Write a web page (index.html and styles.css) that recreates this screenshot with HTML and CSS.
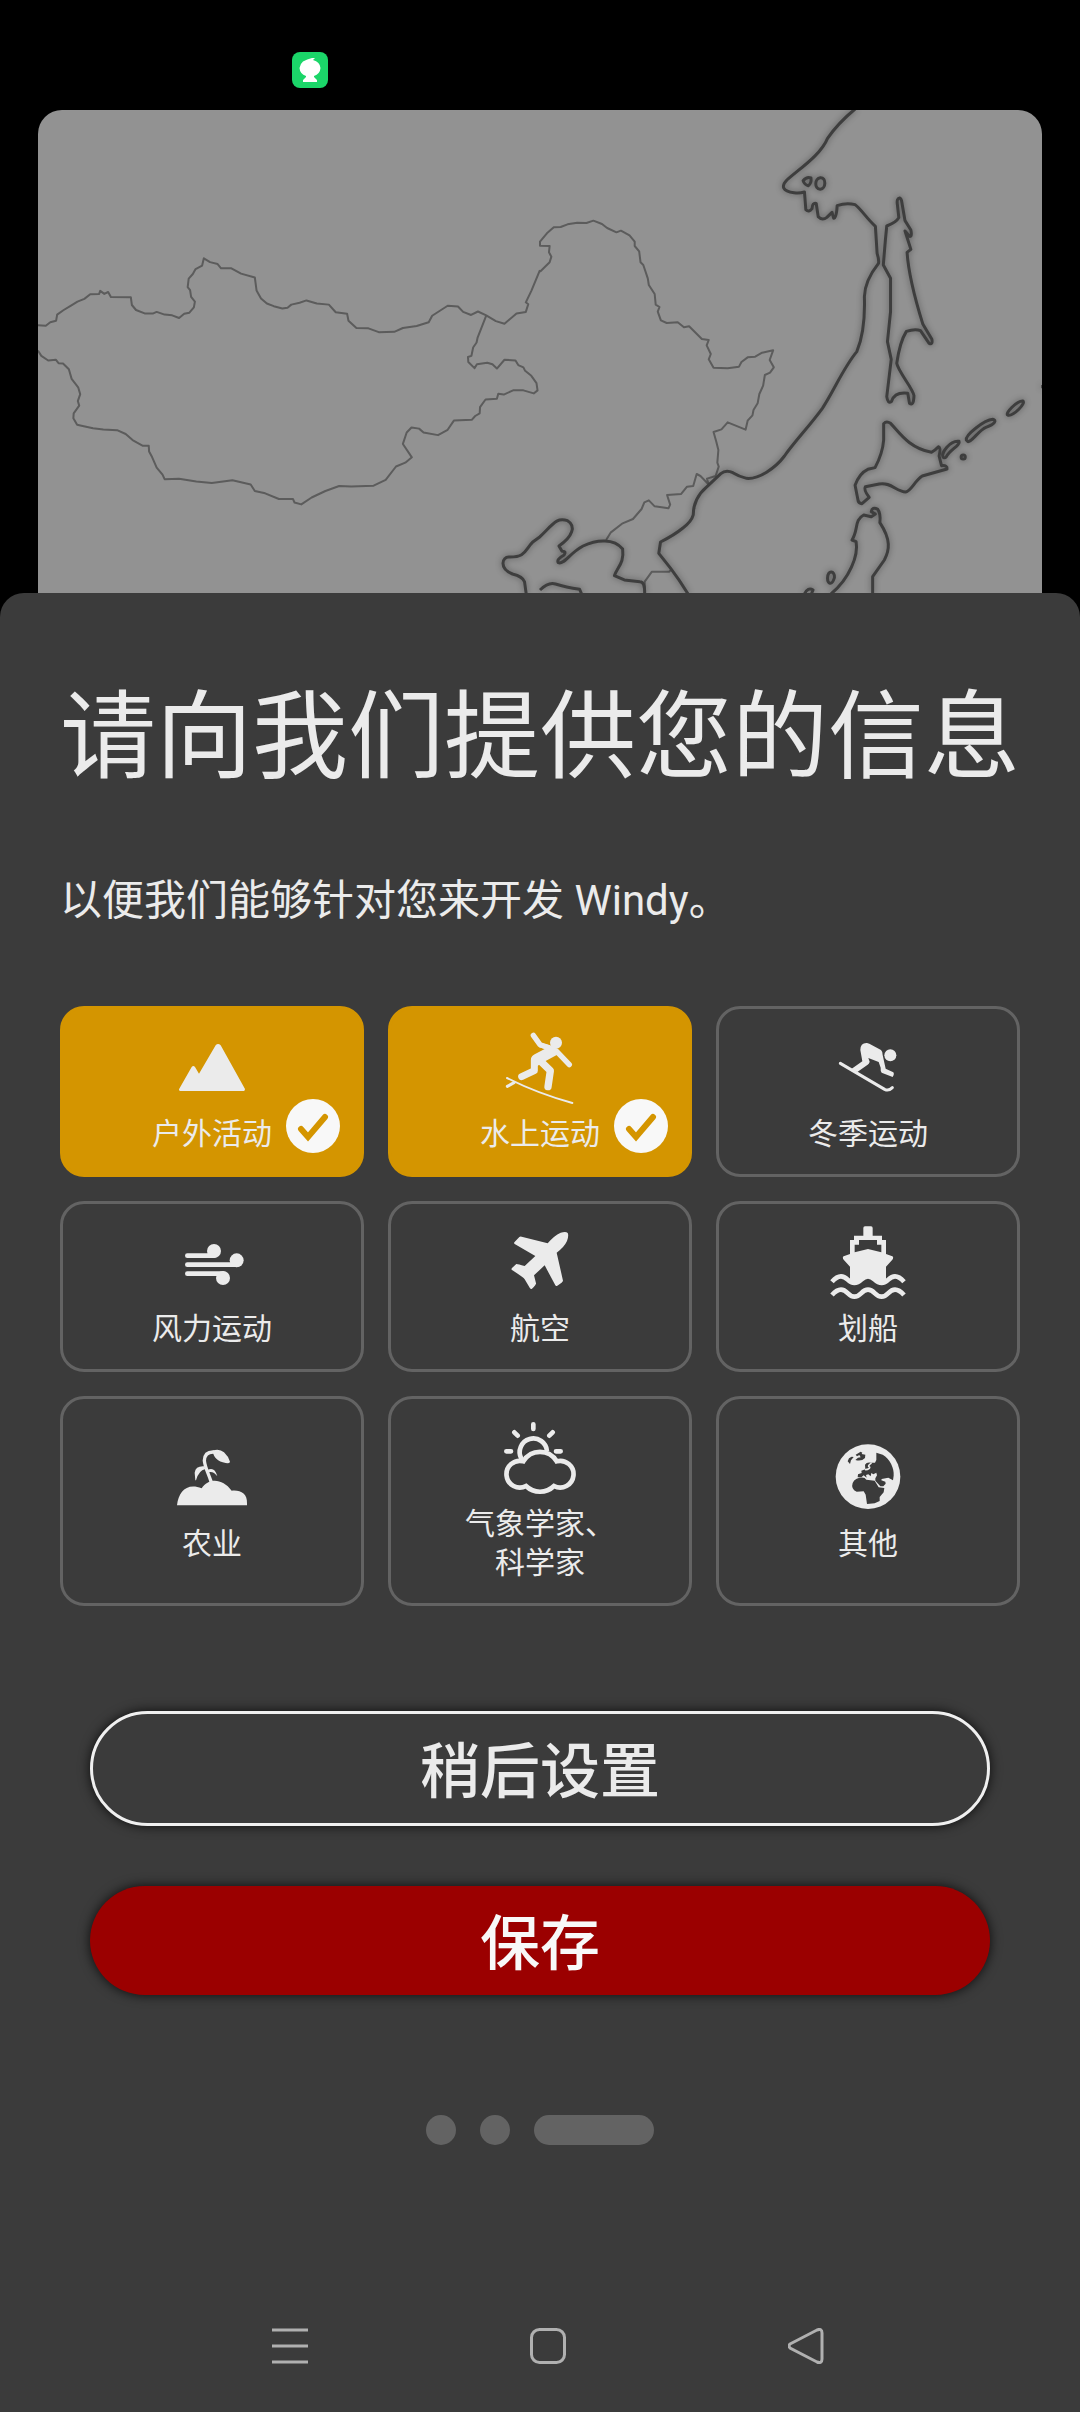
FILE: index.html
```html
<!DOCTYPE html>
<html lang="zh-CN">
<head>
    <meta charset="UTF-8">
    <meta name="viewport" content="width=device-width, initial-scale=1.0">
    <title>Windy</title>
    <link rel="stylesheet" href="styles.css">
</head>
<body>
    <header class="status-bar">
        <svg class="app-icon" viewBox="0 0 36 36" aria-hidden="true">
            <rect width="36" height="36" rx="8" fill="#1bd669"/>
            <path d="M11 9.5Q15 7 20 6L23 6L21 8Q28 10 28.5 16Q28 22 22 24L22 25L25 28V30H11V28L14 25L14 24Q8 22 7.5 16Q8 12 11 9.5Z" fill="#fff"/>
        </svg>
    </header>

    <div class="map">
        <svg viewBox="0 0 1004 483" preserveAspectRatio="xMidYMin slice" aria-hidden="true">
            <!-- Country borders -->
            <g class="border" transform="translate(-38 -110) scale(.34435 .3827)">
                <path d="M110 850L133 851L146 842L163 838L166 822L185 810L205 799L225 788L245 781L262 769L288 768L291 760L303 768L314 763L322 776L380 777L383 797L395 810L420 819L445 819L455 815L478 822L500 824L520 831L535 820L550 817L563 803L566 788L555 776L552 758L545 750L548 728L560 716L568 703L587 694L592 675L610 685L632 690L642 701L672 701L700 715L740 725L745 759L758 780L775 793L795 800L820 806L835 804L846 796L870 791L890 785L920 793L955 796L975 816L1008 820L1012 838L1035 857L1070 858L1100 868L1145 867L1170 857L1210 852L1245 842L1255 825L1300 799L1330 801L1345 815L1368 823L1388 814L1412 824L1440 839L1465 846L1500 819L1527 815L1534 795L1527 790L1543 760L1568 706"/>
                <path d="M110 916L120 930L140 942L162 940L170 949L183 950L200 965L208 990L227 1012L233 1030L226 1048L230 1060L214 1080L213 1093L224 1110L240 1113L270 1119L300 1122L340 1124L365 1134L385 1150L415 1165L432 1165L433 1180L442 1195L455 1222L472 1240L478 1252L520 1251L570 1258L615 1262L675 1255L728 1266L740 1283L770 1289L810 1304L851 1304L855 1313L875 1318L905 1300L945 1283L985 1270L1020 1271L1085 1269L1120 1254L1150 1219L1177 1209L1196 1195L1170 1160L1181 1130L1195 1117L1217 1120L1230 1130L1272 1137L1300 1123L1318 1099L1370 1097L1380 1087L1393 1080L1394 1064L1410 1044L1443 1042L1447 1029L1463 1031L1490 1020L1520 1020L1550 1028L1561 1020L1558 1001L1543 982L1525 969L1520 960L1505 954L1497 942L1465 940L1443 963L1430 952L1415 948L1385 952L1378 962L1360 946L1359 933L1369 930L1374 908L1384 895L1387 882L1412 825"/>
            </g>
            <g class="border" transform="translate(502 -20) scale(.34435 .33333)">
                <path d="M0 545L28 517L33 500L26 487L28 468L0 467V455L20 430L40 412L60 411L80 403L108 398L135 399L155 392L180 402L195 414L222 427L235 422L260 436L275 455L275 468L288 484L292 517L300 525L313 565L316 585L333 612L336 644L347 651L342 665L351 691L368 699L400 697L418 712L433 709L470 747L490 750L484 766L496 792L490 808L504 833L545 835L578 830L585 816L603 802L625 800L645 788L677 781L667 810L679 832L668 848L653 855L648 887L637 912L632 940L620 960L617 976L603 992L597 1019L545 997L527 1018L504 1026L512 1055L518 1080L515 1118L519 1130L510 1158L485 1166L490 1184L466 1158L455 1152L445 1188L427 1190L410 1212L369 1215L378 1244L373 1255L333 1249L316 1231L303 1237L295 1257L270 1287L240 1300L205 1328L192 1350"/>
                <path d="M380 1440L375 1445L325 1445L304 1475L305 1510"/>
            </g>
            <!-- Coastline and islands -->
            <g class="coast" transform="translate(502 -20) scale(.34435 .33333)">
                <path d="M915 57Q865 100 835 145C815 195 755 235 717 270C700 288 703 304 738 308Q752 311 768 306L772 359Q781 368 790 356Q791 337 802 340L808 380Q820 393 833 382L848 367L853 385Q861 385 863 347Q890 337 915 344C935 360 948 385 974 409L979 490Q985 510 983 520C960 550 943 580 942 620C944 680 938 740 920 785C880 835 855 900 820 955C785 1005 735 1060 710 1098C683 1135 635 1168 600 1165Q577 1159 560 1148Q540 1138 525 1151L485 1190Q445 1225 445 1275Q440 1295 415 1314Q390 1335 350 1356L345 1390L380 1436Q405 1470 430 1512"/>
                <path d="M764 272Q775 259 787 264Q789 280 779 287Q768 285 764 272ZM814 263C832 261 831 297 814 298C795 296 798 265 814 263Z"/>
                <path d="M1044 324Q1035 325 1038 345L1042 383Q1035 397 1007 408L1003 450L997 525L1018 565L1018 665L1009 755L1020 808L1007 920Q1010 943 1021 934Q1030 905 1068 910L1073 940Q1085 950 1086 917C1083 895 1040 845 1036 820Q1045 755 1064 724Q1090 715 1105 722L1130 760Q1141 765 1138 748L1112 703C1090 630 1070 550 1066 487L1077 478L1060 423L1073 439Q1081 441 1077 420L1060 392L1050 332Q1047 323 1044 324Z"/>
                <path d="M998 1001Q1006 992 1018 1000C1042 1025 1070 1074 1137 1087Q1148 1080 1157 1070Q1165 1073 1159 1098L1166 1127Q1184 1125 1182 1137L1110 1158C1090 1170 1078 1203 1062 1206C1035 1205 1018 1175 985 1182L945 1190Q939 1200 956 1222L935 1241Q926 1240 924 1233L915 1186Q927 1150 952 1138L973 1133Q995 1090 998 1050Z"/>
                <path d="M1170 1100C1165 1090 1190 1050 1217 1054C1222 1065 1190 1080 1180 1100Q1174 1107 1170 1100ZM1238 1050C1235 1035 1290 990 1315 988C1327 990 1322 1003 1295 1012C1275 1020 1255 1055 1243 1055ZM1358 975C1350 970 1385 932 1402 933C1413 938 1375 980 1358 975Z"/>
                <circle cx="1229" cy="1101" r="6"/>
                <path d="M845 1512C900 1465 925 1395 918 1355L906 1350C925 1320 912 1290 940 1275L962 1280L974 1272L962 1265Q965 1250 980 1257Q990 1270 987 1298C1020 1350 1015 1380 1000 1410L966 1460V1512"/>
                <path d="M835 1465C835 1438 857 1442 855 1463C847 1490 835 1480 835 1465ZM768 1512Q778 1490 793 1500L788 1512"/>
                <path d="M-40 1512L-45 1475Q-50 1460 -80 1452C-120 1435 -110 1400 -90 1401C-40 1402 -45 1380 -20 1355L0 1340C40 1300 48 1282 80 1292C105 1308 95 1340 55 1368L64 1384Q78 1383 70 1395Q47 1408 53 1418C70 1425 85 1390 125 1368C165 1348 215 1345 240 1377C245 1420 225 1430 216 1457L245 1470L290 1475Q305 1475 304 1512"/>
                <path d="M0 1500Q25 1475 45 1482Q75 1492 115 1498L121 1512M1460 885V895"/>
            </g>
        </svg>
    </div>

    <main class="sheet">
        <h1>请向我们提供您的信息</h1>
        <p class="intro">以便我们能够针对您来开发 Windy。</p>

        <form class="profile-form">
            <div class="options">
                <label class="option">
                    <input type="checkbox" name="interest" value="outdoor" checked>
                    <svg class="icon" viewBox="0 0 216 216" aria-hidden="true">
                        <path d="M9 178L47 111Q52 105 57 111L69 131L119 46Q126 38 134 46L207 177Q207 183 203 183H13Q8 183 9 178Z"/>
                    </svg>
                    <span>户外活动</span>
                    <svg class="badge" viewBox="0 0 54 54" aria-hidden="true"><circle cx="27" cy="27" r="27"/><path d="M15 30L22 38L39 18"/></svg>
                </label>
                <label class="option">
                    <input type="checkbox" name="interest" value="water" checked>
                    <svg class="icon" viewBox="0 0 216 216" aria-hidden="true">
                        <circle cx="156" cy="38" r="18"/>
                        <path d="M112 39L134 45L160 56L168 70L154 77L118 97L100 108H81V88Q82 78 92 73L122 57L104 51Z"/>
                        <g class="line">
                            <path d="M88 16L108 44L136 53M158 64L196 104" stroke-width="16"/>
                            <path d="M91 90V122L53 140" stroke-width="21"/>
                            <path d="M108 92L139 122L132 170" stroke-width="22"/>
                            <path d="M9 144Q100 190 205 219" stroke-width="6"/>
                            <path d="M10 169L30 158" stroke-width="9"/>
                        </g>
                    </svg>
                    <span>水上运动</span>
                    <svg class="badge" viewBox="0 0 54 54" aria-hidden="true"><circle cx="27" cy="27" r="27"/><path d="M15 30L22 38L39 18"/></svg>
                </label>
                <label class="option">
                    <input type="checkbox" name="interest" value="winter">
                    <svg class="icon" viewBox="0 0 216 216" aria-hidden="true">
                        <circle cx="175" cy="76" r="18"/>
                        <path d="M85 60Q85 38 105 39L112 41L147 60Q152 64 152 75L161 116L184 127Q188 132 182 141L149 128Q145 124 146 113L140 96L109 84L113 95Q112 101 107 104L76 126L58 117L91 94Z"/>
                        <path class="line" d="M25 100L158 178Q170 184 181 173" stroke-width="9"/>
                    </svg>
                    <span>冬季运动</span>
                    <svg class="badge" viewBox="0 0 54 54" aria-hidden="true"><circle cx="27" cy="27" r="27"/><path d="M15 30L22 38L39 18"/></svg>
                </label>
                <label class="option">
                    <input type="checkbox" name="interest" value="wind">
                    <svg class="icon" viewBox="0 0 216 216" aria-hidden="true">
                        <circle cx="114" cy="78" r="21"/>
                        <circle cx="182" cy="106" r="21"/>
                        <circle cx="141" cy="159" r="21"/>
                        <path class="line" d="M34 92H114M34 119H182M34 146H141" stroke-width="14"/>
                    </svg>
                    <span>风力运动</span>
                    <svg class="badge" viewBox="0 0 54 54" aria-hidden="true"><circle cx="27" cy="27" r="27"/><path d="M15 30L22 38L39 18"/></svg>
                </label>
                <label class="option">
                    <input type="checkbox" name="interest" value="aviation">
                    <svg class="icon" viewBox="0 0 216 216" aria-hidden="true">
                        <path d="M131 55Q150 32 170 23Q186 18 191 24Q195 31 189 48Q181 66 158 83L177 167Q177 171 160 182Q156 185 154 181L122 121L90 151L96 175Q97 179 84 191Q81 194 78 190L62 163Q60 158 24 135Q21 133 24 129L37 117Q39 116 62 123L94 93L32 57Q29 55 31 52L46 36Q48 34 53 35Z"/>
                    </svg>
                    <span>航空</span>
                    <svg class="badge" viewBox="0 0 54 54" aria-hidden="true"><circle cx="27" cy="27" r="27"/><path d="M15 30L22 38L39 18"/></svg>
                </label>
                <label class="option">
                    <input type="checkbox" name="interest" value="boating">
                    <svg class="icon" viewBox="0 0 216 216" aria-hidden="true">
                        <path d="M94 32V9Q94 4 99 4H117Q122 4 122 9V32H150V45H162V87L181 94Q186 97 181 104L162 125V168Q155 176 146 176C125 174 125 159 108 159C91 159 91 174 70 176Q61 176 54 168V125L35 104Q30 97 35 94L54 87V45H66V32ZM68 82L108 72L148 82V59H135V45H81V59H68Z" fill-rule="evenodd"/>
                        <path class="line wave" d="M0 170Q14 154 27 154C47 154 47 174 67 174C88 174 88 154 108 154C128 154 128 174 149 174C169 174 169 154 189 154Q202 154 216 170M0 210Q14 194 27 194C47 194 47 215 67 215C88 215 88 194 108 194C128 194 128 215 149 215C169 215 169 194 189 194Q202 194 216 210" stroke-width="14"/>
                    </svg>
                    <span>划船</span>
                    <svg class="badge" viewBox="0 0 54 54" aria-hidden="true"><circle cx="27" cy="27" r="27"/><path d="M15 30L22 38L39 18"/></svg>
                </label>
                <label class="option">
                    <input type="checkbox" name="interest" value="farming">
                    <svg class="icon" viewBox="0 0 216 216" aria-hidden="true">
                        <path d="M3 196C8 155 32 128 77 145C98 112 140 115 167 152C192 149 215 160 213 190V196Z"/>
                        <path d="M110 32Q130 25 144 37Q157 49 162 65Q161 71 149 69C125 64 112 52 110 32ZM85 79Q59 77 56 98L58 121H60Q68 91 88 87ZM94 90Q116 78 124 109Q112 93 98 97Z"/>
                        <path class="line" d="M105 124C95 95 87 82 85 62Q86 35 113 36" stroke-width="10"/>
                    </svg>
                    <span>农业</span>
                    <svg class="badge" viewBox="0 0 54 54" aria-hidden="true"><circle cx="27" cy="27" r="27"/><path d="M15 30L22 38L39 18"/></svg>
                </label>
                <label class="option">
                    <input type="checkbox" name="interest" value="science">
                    <svg class="icon" viewBox="0 0 216 216" aria-hidden="true">
                        <g class="line" stroke-width="14">
                            <path d="M88 13V27M31 37L41 47M146 37L136 47M7 94H21M156 94H170"/>
                            <path class="wave" d="M58 124L52 116A41 41 0 1 1 129 94"/>
                            <path class="wave" d="M58 124A58 58 0 0 1 158 124A40 40 0 1 1 150 198A60 60 0 0 1 66 198A40 40 0 1 1 58 124Z"/>
                        </g>
                    </svg>
                    <span>气象学家、<br>科学家</span>
                    <svg class="badge" viewBox="0 0 54 54" aria-hidden="true"><circle cx="27" cy="27" r="27"/><path d="M15 30L22 38L39 18"/></svg>
                </label>
                <label class="option">
                    <input type="checkbox" name="interest" value="other">
                    <svg class="icon" viewBox="0 0 216 216" aria-hidden="true">
                        <circle cx="108" cy="110" r="97"/>
                        <g class="land" transform="translate(-396 -178)">
                            <path d="M529 216L548 222C570 235 583 262 581 285L579 299L565 291L545 295L544 299L556 303L557 309L550 317L541 317L526 300V293L531 284L529 276L520 281L514 277L512 287L505 281L498 283L500 291L491 284L484 290L473 290L474 281L485 277L484 270L496 266L495 252Q500 243 514 246L525 246L529 238Z"/>
                            <path d="M470 294Q485 288 494 292L499 297L524 300L536 320L553 322L551 335L539 349V361L524 368L501 370L497 342L491 332L470 333Q452 325 458 307Q461 298 470 294Z"/>
                            <path d="M467 222L482 213L487 216L485 220L496 222L495 232Q485 243 466 238L474 231L482 230L478 223L471 227ZM455 228L461 229L453 239L450 250L443 242L447 233Z"/>
                        </g>
                        <path class="line" d="M101 89Q112 88 113 82Q105 78 117 70" stroke-width="5"/>
                    </svg>
                    <span>其他</span>
                    <svg class="badge" viewBox="0 0 54 54" aria-hidden="true"><circle cx="27" cy="27" r="27"/><path d="M15 30L22 38L39 18"/></svg>
                </label>
            </div>

            <div class="actions">
                <button type="button" class="btn btn-later">稍后设置</button>
                <button type="submit" class="btn btn-save">保存</button>
            </div>
        </form>

        <div class="pager">
            <span class="dot"></span>
            <span class="dot"></span>
            <span class="dot active"></span>
        </div>
    </main>

    <nav class="nav-bar">
        <button type="button" aria-label="最近任务">
            <svg viewBox="0 0 36 36"><path d="M0 2H36M0 18H36M0 34H36"/></svg>
        </button>
        <button type="button" aria-label="主屏幕">
            <svg viewBox="0 0 36 36"><rect x="1.5" y="1.5" width="33" height="33" rx="8"/></svg>
        </button>
        <button type="button" aria-label="返回">
            <svg viewBox="0 0 36 36"><path d="M2 16L29 2Q34 0 34 5V31Q34 36 29 34L2 20Q0 18 2 16Z"/></svg>
        </button>
    </nav>
</body>
</html>
```
FILE: styles.css
```css
* {
    box-sizing: border-box;
}

body {
    margin: 0;
    min-height: 100vh;
    display: flex;
    flex-direction: column;
    background-color: #000;
    color: #ebebeb;
    font-family: Roboto, "Noto Sans CJK SC", sans-serif;
}

.status-bar {
    height: 110px;
    padding: 52px 292px 0;
}

.app-icon {
    display: block;
    width: 36px;
    height: 36px;
}

/* Map preview */
.map {
    height: 507px;
    margin: 0 38px;
    border-radius: 24px 24px 0 0;
    background-color: #929292;
    overflow: hidden;
}

.map svg {
    display: block;
    width: 100%;
    height: 483px;
}

.border path,
.coast path,
.coast circle {
    fill: none;
    stroke: #5c5c5c;
    stroke-width: 2px;
    stroke-linejoin: round;
    vector-effect: non-scaling-stroke;
}

.coast path,
.coast circle {
    stroke: #3e3e3e;
    stroke-width: 3px;
}

.coast {
    filter: drop-shadow(0 0 9px rgba(0, 0, 0, 0.4));
}

/* Sheet */
.sheet {
    flex: 1;
    margin-top: -24px;
    padding: 84px 60px 0;
    border-radius: 24px 24px 0 0;
    background-color: #3b3b3b;
}

h1 {
    margin: 0;
    font-size: 96px;
    font-weight: 400;
    line-height: 120px;
}

.intro {
    margin: 74px 0 75px;
    font-size: 42px;
    line-height: 60px;
}

.options {
    display: grid;
    grid-template-columns: repeat(3, 1fr);
    gap: 24px;
}

.option {
    position: relative;
    display: flex;
    flex-direction: column;
    align-items: center;
    justify-content: center;
    gap: 12px;
    padding: 21px;
    border: 3px solid #636363;
    border-radius: 24px;
    font-size: 30px;
    line-height: 39px;
    text-align: center;
    cursor: pointer;
}

.option input {
    position: absolute;
    opacity: 0;
}

.option:has(input:checked) {
    background-color: #d49500;
    border-color: #d49500;
}

.icon {
    width: 72px;
    height: 72px;
    fill: #ebebeb;
    overflow: visible;
}

.icon .line {
    fill: none;
    stroke: #ebebeb;
    stroke-linecap: round;
    stroke-linejoin: round;
}

.icon .wave {
    stroke-linecap: butt;
    stroke-linejoin: miter;
}

.icon .land {
    fill: #3b3b3b;
}

.badge {
    display: none;
    position: absolute;
    right: 21px;
    bottom: 21px;
    width: 54px;
    height: 54px;
    fill: #f8f8f8;
}

.badge path {
    fill: none;
    stroke: #d49500;
    stroke-width: 6px;
    stroke-linecap: round;
}

input:checked ~ .badge {
    display: block;
}

/* Buttons */
.actions {
    display: flex;
    flex-direction: column;
    gap: 60px;
    margin: 105px 30px 0;
}

.btn {
    padding: 8px 0 0;
    border: none;
    border-radius: 60px;
    box-shadow: 0 0 12px rgba(0, 0, 0, 0.8);
    background-color: #3b3b3b;
    color: #ebebeb;
    font-family: inherit;
    font-size: 60px;
    font-weight: 500;
    line-height: 101px;
    cursor: pointer;
}

.btn-later {
    border: 3px solid #f0f0f0;
}

.btn-save {
    background-color: #9b0000;
    color: #f8f8f8;
}

/* Page indicator */
.pager {
    display: flex;
    justify-content: center;
    gap: 24px;
    margin-top: 120px;
}

.dot {
    width: 30px;
    height: 30px;
    border-radius: 15px;
    background-color: #636363;
}

.dot.active {
    width: 120px;
}

/* System navigation */
.nav-bar {
    display: flex;
    justify-content: space-around;
    padding: 0 145px 48px 161px;
    background-color: #3b3b3b;
}

.nav-bar button {
    padding: 0;
    border: none;
    background: none;
}

.nav-bar svg {
    display: block;
    width: 36px;
    height: 36px;
    fill: none;
    stroke: #b0b0b0;
    stroke-width: 3px;
}
```
